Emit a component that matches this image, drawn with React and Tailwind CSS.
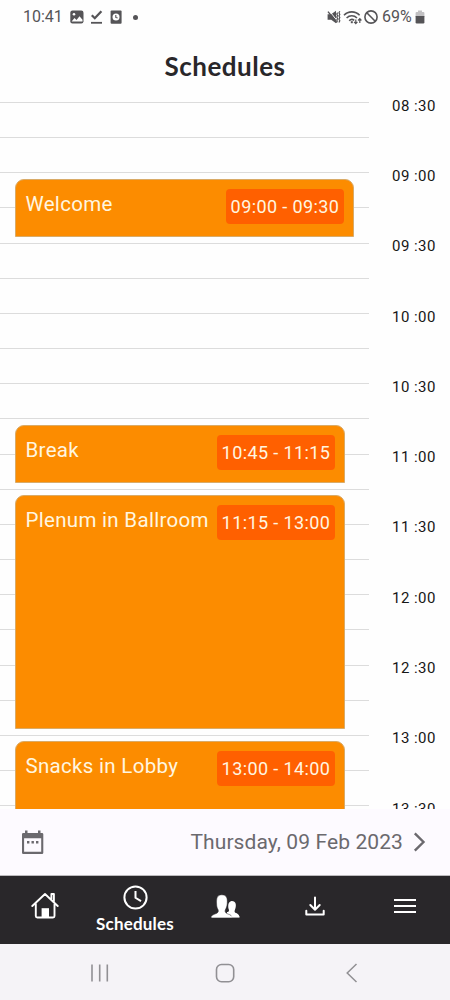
import React from 'react';

const SLOT_HEIGHT = 35.17;
const DAY_START = 8 * 60 + 30;
const FIRST_LINE = 10.4;
const EVENT_GAP = 6;

const slots = Array.from({ length: 21 }, (_, i) => DAY_START + i * 15);

const events = [
  { title: 'Welcome', from: '09:00', to: '09:30', width: 'w-[339px]' },
  { title: 'Break', from: '10:45', to: '11:15', width: 'w-[330px]' },
  { title: 'Plenum in Ballroom', from: '11:15', to: '13:00', width: 'w-[330px]' },
  { title: 'Snacks in Lobby', from: '13:00', to: '14:00', width: 'w-[330px]' },
];

const toMinutes = (time) => {
  const [hours, minutes] = time.split(':').map(Number);
  return hours * 60 + minutes;
};

const formatSlot = (minutes) => {
  const hrs = Math.floor(minutes / 60).toString().padStart(2, '0');
  const mins = (minutes % 60).toString().padStart(2, '0');
  return `${hrs} :${mins}`;
};

const StatusBar = () => (
  <div className="h-[34px] shrink-0 flex items-center justify-between pl-[23px] pr-[25px] text-[#555457]">
    <div className="flex items-center">
      <span className="w-[47px] text-[16px] leading-none">10:41</span>
      <svg className="w-[14px] h-[14px]" viewBox="0 0 14 14">
        <rect x="0.3" y="0.5" width="13.2" height="13" rx="2.2" fill="currentColor" />
        <path d="M1.6 11.5 4.5 8l2 2 3-3.8 3 3.6v1.8z" fill="#fff" />
        <circle cx="4" cy="4.2" r="1.3" fill="#fff" />
      </svg>
      <svg className="ml-[6px] w-[13px] h-[14px]" viewBox="0 0 13 14" fill="none" stroke="currentColor">
        <path d="m1.8 5.2 3 3L11.4 1.3" strokeWidth="2.3" />
        <path d="M1 12.8h11" strokeWidth="1.8" />
      </svg>
      <svg className="ml-[7px] w-[12px] h-[14px]" viewBox="0 0 12 14">
        <rect x="0.6" y="0.5" width="11" height="13.2" rx="1" fill="currentColor" />
        <circle cx="6" cy="7" r="3.5" fill="#fff" />
        <path d="M5.8 5v2.4l1.8.7" stroke="currentColor" strokeWidth="1.1" fill="none" />
      </svg>
      <span className="ml-[11px] size-[5px] rounded-full bg-[#555457]" />
    </div>
    <div className="flex items-center">
      <svg className="w-[14px] h-[14px]" viewBox="0 0 14 14" fill="none" stroke="currentColor">
        <path d="M.6 4.2h3.6L9 .8v12.4L4.2 9.8H.6z" fill="currentColor" stroke="none" />
        <path d="m2.400 1 8 10" stroke="#fff" strokeWidth="1" />
        <path d="m1 1.600 9 11" strokeWidth="1.400" />
        <path d="m10.600 2.600-.8 1.500.8 1.500-.8 1.500.8 1.500-.8 1.500.8 1.500M12.800 1.200 12 2.800l.8 1.600-.8 1.600.8 1.600-.8 1.600.8 1.600-.8 1.600" strokeWidth="1.200" />
      </svg>
      <svg className="ml-[2px] w-[20px] h-[15px]" viewBox="0 0 20 15" fill="none" stroke="currentColor" strokeWidth="1.6">
        <path d="M1 5.2C5.2.8 12.4.8 16.6 5.2M3.6 8c3-3 7.4-3 10.4 0M6.2 10.7c1.4-1.4 3.6-1.5 5-.3" />
        <path d="M8.8 11.2v2" strokeWidth="2" />
        <path d="M12.8 9.5v4m-1.7-1.7 1.7 1.8 1.6-1.8M16.8 13V8.5m-1.7 2 1.7-1.9 1.6 1.9" strokeWidth="1.2" />
      </svg>
      <svg className="ml-[1px] w-[14px] h-[14px]" viewBox="0 0 14 14" fill="none" stroke="currentColor" strokeWidth="1.6">
        <circle cx="7" cy="7" r="6.1" />
        <path d="m2.8 2.8 8.4 8.4" />
      </svg>
      <span className="ml-[4px] w-[33px] text-[16px] leading-none">69%</span>
      <svg className="w-[10px] h-[14px]" viewBox="0 0 10 14">
        <path d="M3 .5h4V2h1.4q1 0 1 1v4H.6V3q0-1 1-1H3z" fill="#c2c1c3" />
        <path d="M.6 6h8.8v6.3q0 1.2-1.2 1.2H1.8q-1.2 0-1.2-1.2z" fill="currentColor" />
      </svg>
    </div>
  </div>
);

const EventCard = ({ event }) => {
  const start = toMinutes(event.from);
  const end = toMinutes(event.to);
  const top = FIRST_LINE + ((start - DAY_START) / 15) * SLOT_HEIGHT + EVENT_GAP;
  const height = ((end - start) / 15) * SLOT_HEIGHT - EVENT_GAP * 2;

  return (
    <div
      className={`absolute left-[15px] ${event.width} flex items-start justify-between rounded-t-[9px] border border-[#d9ab68] bg-[#fc8c00] pt-[9px] pl-[9.5px] pr-[9px] text-[#fff6e0]`}
      style={{ top, height }}
    >
      <span className="pt-[2px] text-[20.5px] leading-[26px] tracking-[0.3px] whitespace-nowrap">{event.title}</span>
      <span className="flex h-[35px] w-[118px] items-center justify-center rounded-[4px] bg-[#ff6000] text-[18px] tracking-[0.4px] whitespace-nowrap">
        {event.from} - {event.to}
      </span>
    </div>
  );
};

const Timeline = () => (
  <div className="relative h-[717px] shrink-0 overflow-hidden pt-[10px]">
    {slots.map((minutes) => (
      <div key={minutes} className="flex h-[35.17px] items-start">
        <div className="w-[369px] border-t border-[#dcdcdc]" />
        {minutes % 30 === 0 && (
          <span className="-mt-[6.4px] ml-[23px] text-[15px] leading-[20px] tracking-[0.45px] text-[#161616] whitespace-pre">
            {formatSlot(minutes)}
          </span>
        )}
      </div>
    ))}
    {events.map((event) => (
      <EventCard key={event.title} event={event} />
    ))}
  </div>
);

const DateBar = () => (
  <div className="h-[66px] shrink-0 flex items-center justify-between bg-[#fdfaff] pl-[21px] pr-[24px] text-[#6b696e]">
    <svg className="w-[23px] h-[25px]" viewBox="0 0 23 25">
      <path
        fill="currentColor"
        fillRule="evenodd"
        d="M4 .5h2.5V3H17V.5h2.5V3H21q1.300 0 1.300 1.300v18.400q0 1.300-1.300 1.300H2.300Q1 24 1 22.700V4.300Q1 3 2.300 3H4zM3.100 8.300v13.500h17.100V8.300z"
      />
      <path d="M6 11.100h2.400v2.400H6zM10.500 11.100h2.400v2.400h-2.400zM15 11.100h2.400v2.400H15z" fill="currentColor" />
    </svg>
    <div className="flex items-center">
      <span className="text-[21px] leading-[26px] tracking-[0.1px]">Thursday, 09 Feb 2023</span>
      <svg className="ml-[10px] w-[13px] h-[20px]" viewBox="0 0 13 20" fill="none" stroke="currentColor" strokeWidth="2.4">
        <path d="m1.800 1.300 8.700 8.700-8.700 8.700" />
      </svg>
    </div>
  </div>
);

const TabBar = () => (
  <div className="grid h-[69px] shrink-0 grid-cols-5 border-t border-[#bcbabd] bg-[#29272a] text-white">
    <div className="flex justify-center pt-[16px]">
      <svg className="w-[28px] h-[28px]" viewBox="0 0 28 28" fill="none" stroke="currentColor" strokeWidth="1.9" strokeLinejoin="round" strokeLinecap="round">
        <path d="M1.300 14 14 2l12.700 12M4.800 12v12q0 1.500 1.500 1.500H22q1.500 0 1.500-1.500V12M20.400 7V2h2.500v7.500" />
        <path d="M10.600 25v-8.800H18V25z" fill="currentColor" stroke="none" />
      </svg>
    </div>
    <div className="flex flex-col items-center pt-[9px]">
      <svg className="w-[25px] h-[25px]" viewBox="0 0 25 25" fill="none" stroke="currentColor" strokeWidth="2">
        <circle cx="12.5" cy="12.5" r="11.100" />
        <path d="M12.5 6v6.800l5.500 3.300" />
      </svg>
      <span className="mt-[4px] font-['Lato',sans-serif] text-[17px] leading-[19px] font-bold tracking-[0.2px]">Schedules</span>
    </div>
    <div className="flex justify-center pt-[18px]">
      <svg className="w-[29px] h-[25px]" viewBox="0 0 29 25" fill="currentColor">
        <path d="M16 23v-5c1.500 0 2-.5 2-2-1.300-3-1.200-8.500 2.600-9 4.400-.2 5 4 3.700 7.800-.7 1.600-1.200 3.400 0 4 2 .8 4 1.500 4 4.200z" />
        <path d="M.4 23.500c0-2 1-2.400 3.400-3.400 2.200-.9 4-1.600 3.400-4.200-1.300-2-1.500-3.800-1.600-5.800C5.200 4 6.300.8 10.800.8c4.700 0 5.900 3.200 5.400 8.800-.2 2.500-.7 4.200-2 6.500-.5 2.600.8 3 3 4 2.700 1 3.600 1.500 3.600 3.400z" stroke="#29272a" strokeWidth=".5" />
        <path d="M.5 22.300h28v1.300H.5z" />
      </svg>
    </div>
    <div className="flex justify-center pt-[20px]">
      <svg className="w-[20px] h-[20px]" viewBox="0 0 20 20" fill="none" stroke="currentColor" strokeWidth="2" strokeLinejoin="round" strokeLinecap="round">
        <path d="M10 1.500v12M5.300 9l4.700 4.700L14.700 9M1.300 14.800v3.700h17.400v-3.700" />
      </svg>
    </div>
    <div className="flex flex-col items-center gap-[4px] pt-[23px]">
      <span className="h-[2px] w-[22px] bg-white" />
      <span className="h-[2px] w-[22px] bg-white" />
      <span className="h-[2px] w-[22px] bg-white" />
    </div>
  </div>
);

const SystemNav = () => (
  <div className="flex flex-1 items-center bg-[#f5f3f7] pt-[1px] pl-[91px] text-[#919094]">
    <svg className="w-[18px] h-[20px]" viewBox="0 0 18 20" stroke="currentColor" strokeWidth="1.6">
      <path d="M1 1.500v17M8.700 1.500v17M16.300 1.500v17" />
    </svg>
    <svg className="ml-[106px] w-[20px] h-[20px]" viewBox="0 0 20 20" fill="none" stroke="currentColor" strokeWidth="1.6">
      <rect x="1.5" y="1.5" width="17.2" height="17.2" rx="5" />
    </svg>
    <svg className="ml-[110px] w-[13px] h-[20px]" viewBox="0 0 13 20" fill="none" stroke="currentColor" strokeWidth="1.5">
      <path d="m11.500 1-9.300 9 9.300 9" />
    </svg>
  </div>
);

const App = () => {
  return (
    <div className="flex h-[1000px] w-[450px] flex-col overflow-hidden bg-[#fefefe] font-['Roboto',sans-serif]">
      <StatusBar />
      <header className="h-[58px] shrink-0 flex justify-center pt-[17px]">
        <h1 className="font-['Lato',sans-serif] text-[26px] leading-[30px] font-bold tracking-[0.5px] text-[#29272a]">
          Schedules
        </h1>
      </header>
      <Timeline />
      <DateBar />
      <TabBar />
      <SystemNav />
    </div>
  );
};

export default App;
